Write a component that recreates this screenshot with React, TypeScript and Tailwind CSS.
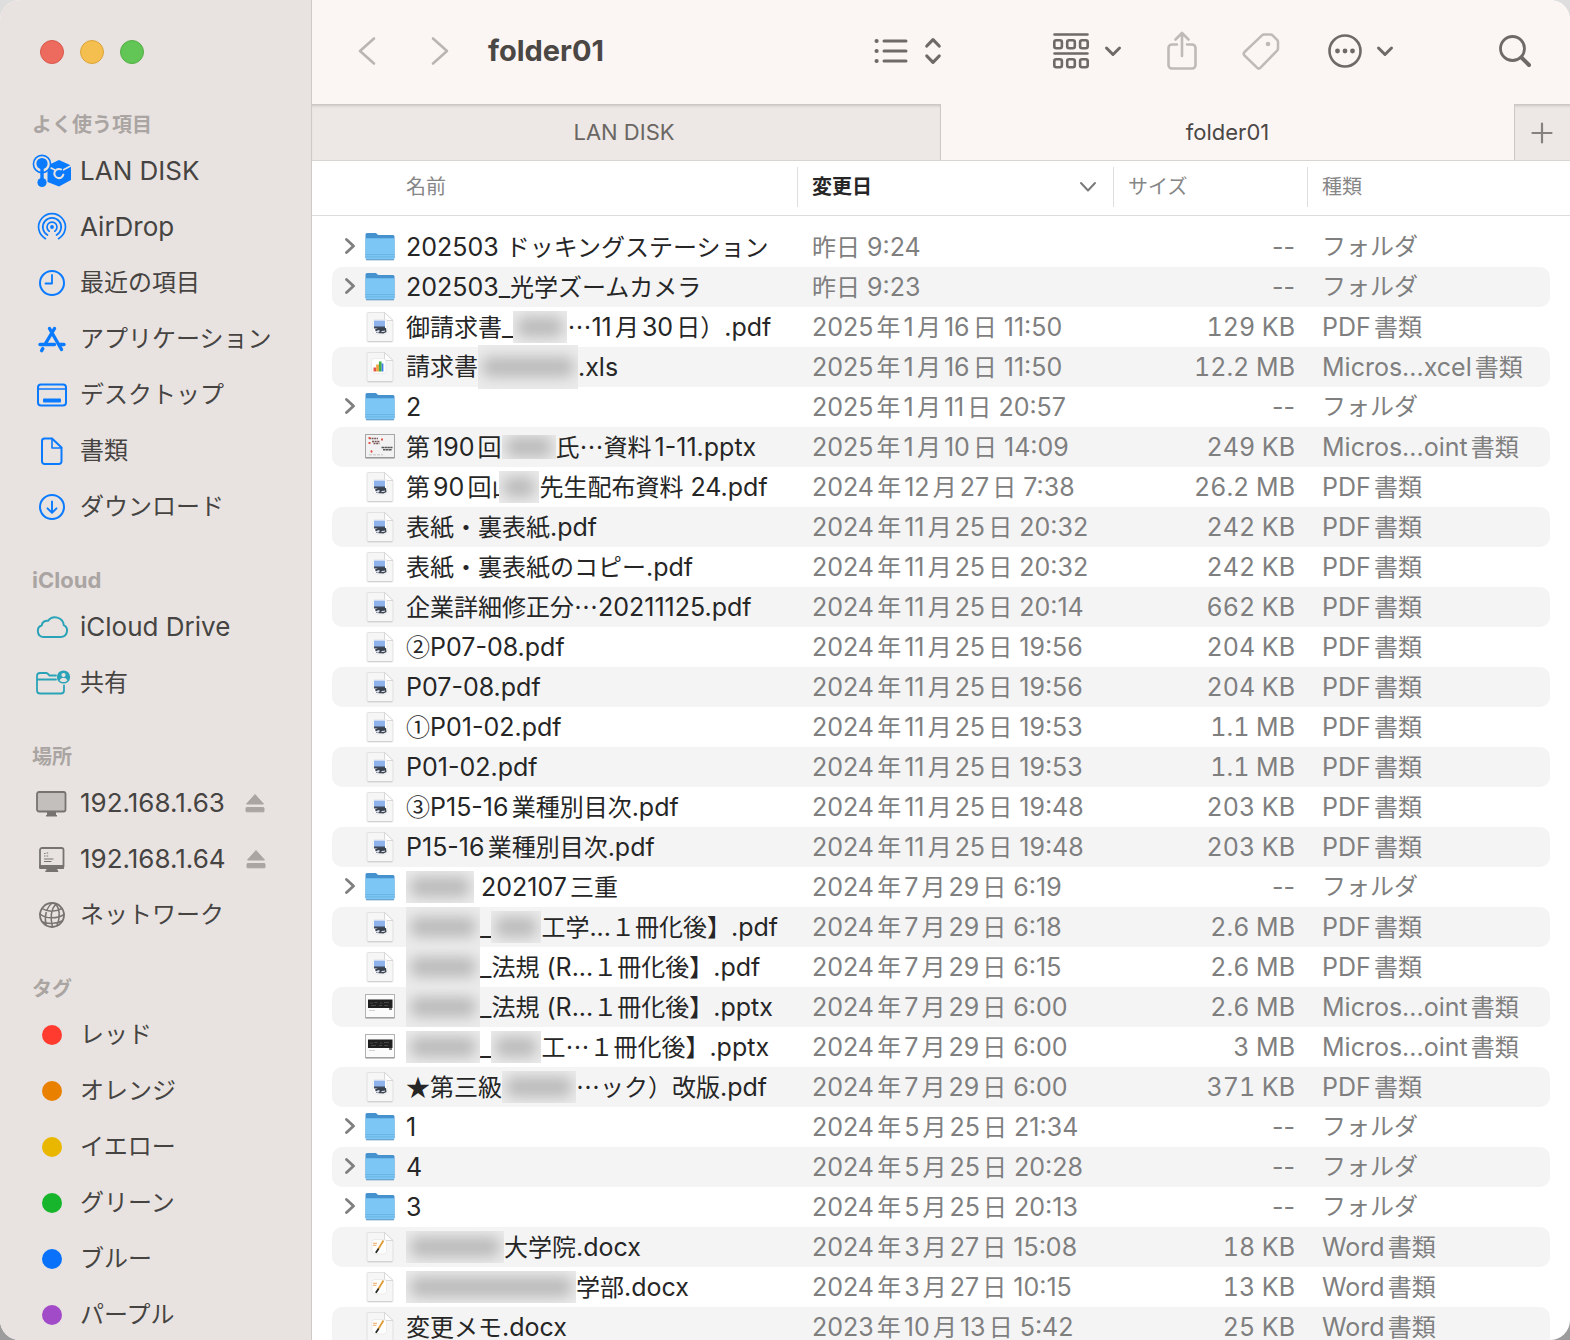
import type { ReactNode } from "react";
import clsx from "clsx";

type Part = string | { blur: string };
type Kind = "folder" | "pdf" | "xls" | "slide" | "slideDark" | "docx";

interface FileRow {
  icon: Kind;
  name: Part[];
  date: string;
  size: string;
  kind: string;
}

const FOLDER = "フォルダ";
const PDF = "PDF書類";
const PPT = "Micros...oint書類";
const WORD = "Word書類";

const files: FileRow[] = [
  { icon: "folder", name: ["202503 ドッキングステーション"], date: "昨日 9:24", size: "--", kind: FOLDER },
  { icon: "folder", name: ["202503_光学ズームカメラ"], date: "昨日 9:23", size: "--", kind: FOLDER },
  { icon: "pdf", name: ["御請求書_", { blur: "h-8 w-[54px]" }, "…11月30日）.pdf"], date: "2025年1月16日 11:50", size: "129 KB", kind: PDF },
  { icon: "xls", name: ["請求書", { blur: "h-11 w-[100px]" }, ".xls"], date: "2025年1月16日 11:50", size: "12.2 MB", kind: "Micros...xcel書類" },
  { icon: "folder", name: ["2"], date: "2025年1月11日 20:57", size: "--", kind: FOLDER },
  { icon: "slide", name: ["第190回", { blur: "h-6 w-[54px]" }, "氏…資料1-11.pptx"], date: "2025年1月10日 14:09", size: "249 KB", kind: PPT },
  { icon: "pdf", name: ["第90回山", { blur: "h-8 w-10 -ml-4" }, "先生配布資料 24.pdf"], date: "2024年12月27日 7:38", size: "26.2 MB", kind: PDF },
  { icon: "pdf", name: ["表紙・裏表紙.pdf"], date: "2024年11月25日 20:32", size: "242 KB", kind: PDF },
  { icon: "pdf", name: ["表紙・裏表紙のコピー.pdf"], date: "2024年11月25日 20:32", size: "242 KB", kind: PDF },
  { icon: "pdf", name: ["企業詳細修正分…20211125.pdf"], date: "2024年11月25日 20:14", size: "662 KB", kind: PDF },
  { icon: "pdf", name: ["②P07-08.pdf"], date: "2024年11月25日 19:56", size: "204 KB", kind: PDF },
  { icon: "pdf", name: ["P07-08.pdf"], date: "2024年11月25日 19:56", size: "204 KB", kind: PDF },
  { icon: "pdf", name: ["①P01-02.pdf"], date: "2024年11月25日 19:53", size: "1.1 MB", kind: PDF },
  { icon: "pdf", name: ["P01-02.pdf"], date: "2024年11月25日 19:53", size: "1.1 MB", kind: PDF },
  { icon: "pdf", name: ["③P15-16業種別目次.pdf"], date: "2024年11月25日 19:48", size: "203 KB", kind: PDF },
  { icon: "pdf", name: ["P15-16業種別目次.pdf"], date: "2024年11月25日 19:48", size: "203 KB", kind: PDF },
  { icon: "folder", name: [{ blur: "h-8 w-[68px]" }, " 202107三重"], date: "2024年7月29日 6:19", size: "--", kind: FOLDER },
  { icon: "pdf", name: [{ blur: "h-10 w-[74px]" }, "_", { blur: "h-8 w-[50px]" }, "工学...１冊化後】.pdf"], date: "2024年7月29日 6:18", size: "2.6 MB", kind: PDF },
  { icon: "pdf", name: [{ blur: "h-10 w-[74px]" }, "_法規 (R...１冊化後】.pdf"], date: "2024年7月29日 6:15", size: "2.6 MB", kind: PDF },
  { icon: "slideDark", name: [{ blur: "h-10 w-[74px]" }, "_法規 (R...１冊化後】.pptx"], date: "2024年7月29日 6:00", size: "2.6 MB", kind: PPT },
  { icon: "slideDark", name: [{ blur: "h-8 w-[74px]" }, "_", { blur: "h-8 w-[50px]" }, "工…１冊化後】.pptx"], date: "2024年7月29日 6:00", size: "3 MB", kind: PPT },
  { icon: "pdf", name: ["★第三級", { blur: "h-8 w-[74px]" }, "…ック）改版.pdf"], date: "2024年7月29日 6:00", size: "371 KB", kind: PDF },
  { icon: "folder", name: ["1"], date: "2024年5月25日 21:34", size: "--", kind: FOLDER },
  { icon: "folder", name: ["4"], date: "2024年5月25日 20:28", size: "--", kind: FOLDER },
  { icon: "folder", name: ["3"], date: "2024年5月25日 20:13", size: "--", kind: FOLDER },
  { icon: "docx", name: [{ blur: "h-8 w-[98px]" }, "大学院.docx"], date: "2024年3月27日 15:08", size: "18 KB", kind: WORD },
  { icon: "docx", name: [{ blur: "h-8 w-[170px]" }, "学部.docx"], date: "2024年3月27日 10:15", size: "13 KB", kind: WORD },
  { icon: "docx", name: ["変更メモ.docx"], date: "2023年10月13日 5:42", size: "25 KB", kind: WORD },
];

/* Sidebar icons, all drawn on a 40x36 box */

function SideIcon({ children, className }: { children: ReactNode; className?: string }) {
  return (
    <svg
      viewBox="0 0 40 36"
      className={clsx("h-9 w-10 shrink-0", className)}
      fill="none"
      stroke="currentColor"
      strokeWidth="2"
      strokeLinecap="round"
      strokeLinejoin="round"
      aria-hidden="true"
    >
      {children}
    </svg>
  );
}

const LanDiskIcon = () => (
  <SideIcon className="text-[#0a7aff]">
    <path d="M15.500 12.500 27 7l12 5.500V27l-12 6.500L15.500 29z" fill="currentColor" stroke="none" />
    <path d="M16 13.500l7 3.500M39.500 12.500 31 17" stroke="#e8e3e0" strokeWidth="1.500" strokeLinecap="butt" />
    <path d="M29 16.400a4.600 4.600 0 1 0 2.400 5.200" stroke="#e8e3e0" strokeWidth="2" />
    <circle cx="10" cy="11" r="8.600" fill="#e8e3e0" strokeWidth="1.600" />
    <circle cx="10" cy="10.500" r="5.600" fill="currentColor" stroke="none" />
    <path d="M10 11v18" strokeWidth="3.400" />
    <circle cx="10" cy="29.500" r="4.600" fill="currentColor" stroke="none" />
  </SideIcon>
);

const AirDropIcon = () => (
  <SideIcon className="text-[#0a7aff]">
    <circle cx="20" cy="18" r="1.900" fill="currentColor" stroke="none" />
    <path d="M17.200 22.200a5 5 0 1 1 5.600 0" strokeWidth="1.700" />
    <path d="M15.500 26a9.200 9.200 0 1 1 9 0" strokeWidth="1.700" />
    <path d="M13.500 29.700a13.400 13.400 0 1 1 13 0" strokeWidth="1.700" />
  </SideIcon>
);

const ClockIcon = () => (
  <SideIcon className="text-[#0a7aff]">
    <circle cx="20" cy="18" r="12" />
    <path d="M20 10v8.500h-6.500" strokeWidth="1.800" />
  </SideIcon>
);

const AppsIcon = () => (
  <SideIcon className="text-[#0a7aff]">
    <path d="M17.500 7.500 29.500 28.500M22.500 7.500l-8.700 14.500M10.800 27.600l-1.200 2" strokeWidth="3.400" />
    <path d="M8 23.500h14.500M28 23.500h4" strokeWidth="3.400" />
  </SideIcon>
);

const DesktopIcon = () => (
  <SideIcon className="text-[#0a7aff]">
    <rect x="6" y="7.500" width="28" height="21" rx="3" />
    <path d="M6 12h28" strokeWidth="1.600" />
    <rect x="11" y="21.500" width="18" height="4" rx=".8" fill="currentColor" stroke="none" />
  </SideIcon>
);

const DocumentIcon = () => (
  <SideIcon className="text-[#0a7aff]">
    <path d="M12.500 5.500H20l9.500 9v14a2.500 2.500 0 0 1-2.500 2.500H12.500a2.500 2.500 0 0 1-2.500-2.500V8a2.500 2.500 0 0 1 2.500-2.500z" />
    <path d="M20 5.500V15h9.500" strokeWidth="1.600" />
  </SideIcon>
);

const DownloadIcon = () => (
  <SideIcon className="text-[#0a7aff]">
    <circle cx="20" cy="18" r="12" />
    <path d="M20 12.500v11M15.500 19.300 20 23.800l4.500-4.500" strokeWidth="1.900" />
  </SideIcon>
);

const CloudIcon = () => (
  <SideIcon className="text-[#2aa3b8]">
    <path d="M11.500 28h17.200a6.300 6.300 0 0 0 3.100-11.800A8.800 8.800 0 0 0 16 11.800a5.200 5.200 0 0 0-6.200 4.400A6.100 6.100 0 0 0 11.500 28z" />
  </SideIcon>
);

const SharedFolderIcon = () => (
  <SideIcon className="text-[#2aa3b8]">
    <path d="M24 10.500h-6.500l-2-2a2 2 0 0 0-1.400-.5H8a3 3 0 0 0-3 3v14.500a3 3 0 0 0 3 3h21a3 3 0 0 0 3-3V20.500M5 14.500h19" strokeWidth="1.800" />
    <circle cx="31.500" cy="12" r="6.600" fill="currentColor" stroke="none" />
    <circle cx="31.500" cy="10" r="2.100" fill="#e8e3e0" stroke="none" />
    <path d="M27.700 15.800c.6-2.400 2-3.100 3.800-3.100s3.200.7 3.800 3.100c-2 1.700-5.600 1.700-7.600 0z" fill="#e8e3e0" stroke="none" />
  </SideIcon>
);

const DisplayIcon = () => (
  <SideIcon className="text-[#767371]">
    <rect x="5" y="7" width="28.500" height="19.500" rx="2" fill="#c3bfbd" strokeWidth="1.800" />
    <path d="M15 27h9v3h-9z" fill="currentColor" stroke="none" />
    <path d="M14 30h11v1.500H14z" fill="currentColor" stroke="none" />
  </SideIcon>
);

const PcIcon = () => (
  <SideIcon className="text-[#767371]">
    <rect x="8" y="7" width="23.500" height="20" rx="2" strokeWidth="1.800" />
    <path d="M8 24.500h23.500v3H8zM15.500 28h9l1.500 2.500H14z" fill="currentColor" strokeWidth="1" />
    <path d="M12.500 12.500h.6M15 12h.8M12.500 15h.6M15 15h.8M12.500 18h8.500M12.500 20.500H19" strokeWidth="1" />
  </SideIcon>
);

const NetworkIcon = () => (
  <SideIcon className="text-[#767371]">
    <circle cx="20" cy="18" r="12" strokeWidth="1.800" />
    <path d="M24 6.500c-5 6-6 14-3.500 23.500M20.500 6c-6 4-8.500 13-6.500 22M23.500 6.500c4 5 5 13 1.500 22M10 11.500c5 3.500 13.500 3.500 20 0M8 17c6 5 17 5 24 .5M10.500 25c5.500 2 14 2 19.500-1" strokeWidth="1.500" />
  </SideIcon>
);

const Dot = ({ className }: { className: string }) => (
  <span className="flex w-10 shrink-0 justify-center">
    <span className={clsx("size-5 rounded-full", className)} />
  </span>
);

interface SideItem {
  label: string;
  icon: ReactNode;
  eject?: boolean;
}

const sections: { title: string; items: SideItem[] }[] = [
  {
    title: "よく使う項目",
    items: [
      { label: "LAN DISK", icon: <LanDiskIcon /> },
      { label: "AirDrop", icon: <AirDropIcon /> },
      { label: "最近の項目", icon: <ClockIcon /> },
      { label: "アプリケーション", icon: <AppsIcon /> },
      { label: "デスクトップ", icon: <DesktopIcon /> },
      { label: "書類", icon: <DocumentIcon /> },
      { label: "ダウンロード", icon: <DownloadIcon /> },
    ],
  },
  {
    title: "iCloud",
    items: [
      { label: "iCloud Drive", icon: <CloudIcon /> },
      { label: "共有", icon: <SharedFolderIcon /> },
    ],
  },
  {
    title: "場所",
    items: [
      { label: "192.168.1.63", icon: <DisplayIcon />, eject: true },
      { label: "192.168.1.64", icon: <PcIcon />, eject: true },
      { label: "ネットワーク", icon: <NetworkIcon /> },
    ],
  },
  {
    title: "タグ",
    items: [
      { label: "レッド", icon: <Dot className="bg-[#ff3b30]" /> },
      { label: "オレンジ", icon: <Dot className="bg-[#ea8000]" /> },
      { label: "イエロー", icon: <Dot className="bg-[#eab700]" /> },
      { label: "グリーン", icon: <Dot className="bg-[#16b52c]" /> },
      { label: "ブルー", icon: <Dot className="bg-[#0a72fa]" /> },
      { label: "パープル", icon: <Dot className="bg-[#a24bc8]" /> },
    ],
  },
];

// Latin runs are set a little larger than the kana and kanji beside them
function Mixed({ text, latin = "text-[25px]" }: { text: string; latin?: string }) {
  return (
    <span className="whitespace-pre">
      {text.split(/([\x20-\x7e]+|[…①②③★]+)/).map((run, i) => {
        if (i % 2 === 0) return run;
        const symbol = /[…①②③★]/.test(run);
        return (
          <span key={i} className={symbol ? "font-['Noto_Sans_CJK_JP',sans-serif]" : latin}>
            {run}
          </span>
        );
      })}
    </span>
  );
}

function Sidebar() {
  return (
    <aside className="flex w-78 shrink-0 flex-col overflow-hidden border-r border-[#cfcac7] bg-[#e8e3e0]">
      <div className="flex h-[79px] shrink-0 gap-4 pt-10 pl-10">
        <button aria-label="閉じる" className="size-6 rounded-full border border-[#d9574c] bg-[#ed6a5f]" />
        <button aria-label="しまう" className="size-6 rounded-full border border-[#dba53c] bg-[#f5bf4f]" />
        <button aria-label="拡大" className="size-6 rounded-full border border-[#55ad45] bg-[#61c655]" />
      </div>
      <nav>
        {sections.map((section) => (
          <section key={section.title}>
            <h2 className="flex h-16 items-end pb-[3px] pl-8 text-xl leading-[30px] font-bold text-[#aaa5a2]">
              <Mixed text={section.title} latin="text-[22px]" />
            </h2>
            <ul>
              {section.items.map((item) => (
                <li key={item.label} className="flex h-14 items-center pl-8">
                  <a href="#" className="flex items-center gap-2 text-[#464442]">
                    {item.icon}
                    <Mixed text={item.label} latin="text-[26px]" />
                  </a>
                  {item.eject && (
                    <button aria-label={`${item.label} を取り出す`} className="ml-5 text-[#aaa5a2]">
                      <svg viewBox="0 0 20 20" className="size-5" fill="currentColor" stroke="currentColor" strokeLinejoin="round">
                        <path d="M10 1.500 18.500 11h-17z" />
                        <rect x="1" y="14.500" width="18" height="4.300" rx=".6" />
                      </svg>
                    </button>
                  )}
                </li>
              ))}
            </ul>
          </section>
        ))}
      </nav>
    </aside>
  );
}

const Chevron = ({ className }: { className?: string }) => (
  <svg viewBox="0 0 18 12" className={clsx("h-3 w-[18px]", className)} fill="none" stroke="currentColor" strokeWidth="3" strokeLinecap="round" strokeLinejoin="round" aria-hidden="true">
    <path d="M2.500 3 9 9.500 15.500 3" />
  </svg>
);

function Toolbar() {
  return (
    <header className="flex h-26 shrink-0 items-center bg-[#fbf6f3] pr-[38px] pb-0.5 pl-11 text-[#6f6a67]">
      <button aria-label="戻る" className="text-[#bab5b2]">
        <svg viewBox="0 0 24 32" className="h-8 w-6" fill="none" stroke="currentColor" strokeWidth="2.600" strokeLinecap="round" strokeLinejoin="round">
          <path d="M18 3.500 4 16l14 12.500" />
        </svg>
      </button>
      <button aria-label="進む" className="ml-12 text-[#bab5b2]">
        <svg viewBox="0 0 24 32" className="h-8 w-6" fill="none" stroke="currentColor" strokeWidth="2.600" strokeLinecap="round" strokeLinejoin="round">
          <path d="M5 3.500 19 16 5 28.500" />
        </svg>
      </button>
      <h1 className="ml-9 text-[29px] leading-9 font-bold text-[#4b4745]">folder01</h1>
      <button aria-label="表示" className="ml-auto flex items-center gap-4">
        <svg viewBox="0 0 34 28" className="h-7 w-[34px]" fill="none" stroke="currentColor" strokeWidth="3" strokeLinecap="round">
          <path d="M10 4h22M10 14h22M10 24h22" />
          <path d="M2.500 4h.2M2.500 14h.2M2.500 24h.2" strokeWidth="4" />
        </svg>
        <svg viewBox="0 0 18 28" className="h-7 w-[18px]" fill="none" stroke="currentColor" strokeWidth="3.200" strokeLinecap="round" strokeLinejoin="round">
          <path d="M2.800 9 9 2.600 15.200 9M2.800 19 9 25.400 15.200 19" />
        </svg>
      </button>
      <button aria-label="グループ分け" className="ml-[110px] flex items-center gap-[14px]">
        <svg viewBox="0 0 38 36" className="h-9 w-[38px]" fill="none" stroke="currentColor" strokeWidth="2.600" strokeLinecap="round">
          <path d="M2.500 1.500h33M2.500 20.500h33" />
          <rect x="2.300" y="7.300" width="7.600" height="8" rx="2" />
          <rect x="15.200" y="7.300" width="7.600" height="8" rx="2" />
          <rect x="28.100" y="7.300" width="7.600" height="8" rx="2" />
          <rect x="2.300" y="26.300" width="7.600" height="8" rx="2" />
          <rect x="15.200" y="26.300" width="7.600" height="8" rx="2" />
          <rect x="28.100" y="26.300" width="7.600" height="8" rx="2" />
        </svg>
        <Chevron />
      </button>
      <button aria-label="共有" className="ml-11 pb-0.5 text-[#bfbab7]">
        <svg viewBox="0 0 32 40" className="h-10 w-8" fill="none" stroke="currentColor" strokeWidth="2.600" strokeLinecap="round" strokeLinejoin="round">
          <path d="M11 14.500H6a3.500 3.500 0 0 0-3.500 3.500v17A3.500 3.500 0 0 0 6 38.500h20a3.500 3.500 0 0 0 3.500-3.500V18a3.500 3.500 0 0 0-3.500-3.500h-5M16 26V4M9.500 9.500 16 3l6.500 6.500" />
        </svg>
      </button>
      <button aria-label="タグを編集" className="ml-11 text-[#bfbab7]">
        <svg viewBox="0 0 38 38" className="size-[38px]" fill="none" stroke="currentColor" strokeWidth="2.500" strokeLinejoin="round">
          <path d="M20 3.300a3 3 0 0 1 2-.8h6.500a3 3 0 0 1 2.100.9l4.500 4.500a3 3 0 0 1 .9 2.100v6.500a3 3 0 0 1-.9 2.100L18.500 35.700a2.500 2.500 0 0 1-3.500 0L2.500 23.500a2.500 2.500 0 0 1 0-3.500z" />
          <circle cx="26" cy="12" r="2.300" fill="currentColor" stroke="none" />
        </svg>
      </button>
      <button aria-label="その他" className="ml-12 flex items-center gap-[14px]">
        <svg viewBox="0 0 34 34" className="size-[34px]" fill="none" stroke="currentColor" strokeWidth="2.600">
          <circle cx="17" cy="17" r="15.500" />
          <g fill="currentColor" stroke="none">
            <circle cx="9.500" cy="17" r="2.400" />
            <circle cx="17" cy="17" r="2.400" />
            <circle cx="24.500" cy="17" r="2.400" />
          </g>
        </svg>
        <Chevron />
      </button>
      <button aria-label="検索" className="ml-26">
        <svg viewBox="0 0 34 34" className="size-[34px]" fill="none" stroke="currentColor" strokeLinecap="round">
          <circle cx="14.500" cy="14.500" r="12" strokeWidth="2.800" />
          <path d="m23.500 23.500 7.500 7.500" strokeWidth="4" />
        </svg>
      </button>
    </header>
  );
}

function Tabs() {
  return (
    <div className="flex h-[57px] shrink-0 border-b border-[#d8d4d2] bg-[#fbf6f3] text-[22px] leading-7">
      <button className="w-1/2 border-t border-r border-[#cdc8c5] bg-[#ede8e5] pr-1 pb-0.5 text-[#6a6663] shadow-[inset_0_3px_3px_-2px_#c9c4c1]">
        LAN DISK
      </button>
      <button className="flex-1 text-[#4b4745]">folder01</button>
      <button
        aria-label="新規タブ"
        className="flex w-14 items-center justify-center border-t border-l border-[#cdc8c5] bg-[#ede8e5] pr-0.5 text-[#85817e] shadow-[inset_0_3px_3px_-2px_#c9c4c1]"
      >
        <svg viewBox="0 0 22 22" className="size-[22px]" stroke="currentColor" strokeWidth="2.200" strokeLinecap="round">
          <path d="M11 1.500v19M1.500 11h19" />
        </svg>
      </button>
    </div>
  );
}

/* List icons, 32x32 */

function Paper({ children }: { children: ReactNode }) {
  return (
    <>
      <path d="M4 1.500h16.500L29 9.500v20a1 1 0 0 1-1 1H4a1 1 0 0 1-1-1v-27a1 1 0 0 1 1-1z" fill="#f6f6f6" stroke="#dcdcdc" strokeWidth=".8" />
      <path d="M3.500 30.800h25" stroke="#c4c4c4" strokeWidth=".8" />
      <path d="M20.500 1.500V8a1.500 1.500 0 0 0 1.500 1.500h7z" fill="#fff" stroke="#cfcfcf" strokeWidth=".8" />
      {children}
    </>
  );
}

function FileIcon({ kind }: { kind: Kind }) {
  return (
    <svg viewBox="0 0 32 32" className="mr-[10px] size-8 shrink-0" aria-hidden="true">
      {kind === "folder" && (
        <>
          <path d="M1.500 3.500A1.500 1.500 0 0 1 3 2h8c1 0 1.500.5 2.300 1.200.6.600 1 .8 2 .8H29a1.500 1.500 0 0 1 1.500 1.500V27h-29z" fill="#4592cf" />
          <path d="M1.500 8.200a1 1 0 0 1 1-1h27a1 1 0 0 1 1 1v19a1.500 1.500 0 0 1-1.500 1.500H3a1.500 1.500 0 0 1-1.500-1.500z" fill="#7cc6f5" />
          <path d="M1.500 23.500h29M1.500 25.800h29" stroke="#62aede" strokeWidth=".7" />
          <path d="M2 28.800h28" stroke="#5795bf" strokeWidth="1" />
        </>
      )}
      {kind === "pdf" && (
        <Paper>
          <rect x="9" y="8.500" width="14" height="14.500" rx="2" fill="#fff" stroke="#e2e2e2" strokeWidth=".6" />
          <path d="M10 9.500h11v7H10z" fill="#8fb2ec" />
          <path d="M10 15.500h11v2H10z" fill="#3c4656" />
          <path d="m11 18.500 3-1.500h8l.5 4-3 1.500-7-.5z" fill="#39414f" />
          <path d="M11.500 20.500l3-1.500 1.500 1-2 2z" fill="#dbe4f0" />
          <path d="m17.500 20.800 3.500-.8" stroke="#e8ecf2" strokeWidth="1.100" />
        </Paper>
      )}
      {kind === "xls" && (
        <Paper>
          <rect x="7.500" y="7.500" width="14.500" height="15" rx="3" fill="#fff" stroke="#e2e2e2" strokeWidth=".6" />
          <path d="M9.500 16.500h2.700v4H9.500z" fill="#e2574a" />
          <path d="M12.200 13.500h2.700v7h-2.700z" fill="#f0a03a" />
          <path d="M14.900 10.500h2.700v10h-2.700z" fill="#3fae49" />
          <path d="M17.600 12.500h1.800v8h-1.800z" fill="#3f7de0" />
        </Paper>
      )}
      {kind === "docx" && (
        <Paper>
          <rect x="8" y="8.500" width="14.500" height="14.500" rx="3" fill="#fff" stroke="#e2e2e2" strokeWidth=".6" />
          <path d="M9 12.300h4M9 14.300h3.500" stroke="#f0a860" strokeWidth="1.100" />
          <path d="m19.500 9.500-5.500 9" stroke="#e09a35" strokeWidth="1.800" />
          <path d="m14.200 18.200-2 3" stroke="#2b2b2b" strokeWidth="1.800" strokeLinecap="round" />
        </Paper>
      )}
      {kind === "slide" && (
        <>
          <rect x="1.500" y="3.500" width="29" height="23" fill="#f2f2f2" stroke="#a5a5a5" strokeWidth="1" />
          <path d="M1.500 27h29" stroke="#8e8e8e" />
          <path d="M5 7.500h9M8 10.500h8M9.500 12.500h6" stroke="#7b5a5a" strokeWidth="1.300" strokeDasharray="2 .6" />
          <path d="M17.500 16.500h11M19 18.800h9" stroke="#555" strokeWidth="1.500" strokeDasharray="2.500 .4" />
          <path d="M4.500 7h2M17 8.500h2M4.500 12h2M7 19.500l1 2" stroke="#e0584a" strokeWidth="1.800" />
          <path d="M5 23.800h14" stroke="#b9b9b9" strokeWidth=".8" strokeDasharray="3 1" />
        </>
      )}
      {kind === "slideDark" && (
        <>
          <rect x="1.500" y="3.500" width="29" height="23" fill="#fbfbfb" stroke="#b2b2b2" strokeWidth="1" />
          <path d="M1.500 27h29" stroke="#8e8e8e" />
          <path d="M4 8.500h24.500V17H4z" fill="#202020" />
          <path d="M6 12h3M10.500 11.500h3M16 12h2M20 11.500h5M7 14.500h5M15 14.500h3M20 14.500h4" stroke="#4c4c4c" strokeWidth=".9" />
          <path d="M25 17h3v2h-3z" fill="#777" />
          <path d="M5 19.500h6" stroke="#c8c8c8" strokeWidth=".8" />
        </>
      )}
    </svg>
  );
}

function NamePart({ part }: { part: Part }) {
  if (typeof part === "string") return <Mixed text={part} />;
  return (
    <span className={clsx("relative flex shrink-0 items-center overflow-hidden bg-[#ebebeb]", part.blur)}>
      <span className="mx-1 h-5 flex-1 rounded-lg bg-[#bababa] blur-[7px]" />
    </span>
  );
}

function FileTable() {
  const th = "h-[55px] border-b border-[#dcdcdc] p-0 pb-0.5 text-left font-normal";
  const thInner = "flex h-10 items-center justify-between border-l border-[#dedede] pr-4 pl-[14px]";
  return (
    <table className="w-full table-fixed border-separate border-spacing-0">
      <colgroup>
        <col className="w-5" />
        <col className="w-[465px]" />
        <col className="w-[316px]" />
        <col className="w-[194px]" />
        <col />
        <col className="w-5" />
      </colgroup>
      <thead className="text-xl leading-7 text-[#868686]">
        <tr>
          <td className={th} />
          <th scope="col" className={clsx(th, "pl-[74px]")}>名前</th>
          <th scope="col" aria-sort="descending" className={th}>
            <div className={clsx(thInner, "font-bold text-[#262626]")}>
              変更日
              <svg viewBox="0 0 18 12" className="h-3 w-[18px] text-[#7a7a7a]" fill="none" stroke="currentColor" strokeWidth="2" strokeLinecap="round" strokeLinejoin="round" aria-hidden="true">
                <path d="M2 2l7 7.500L16 2" />
              </svg>
            </div>
          </th>
          <th scope="col" className={th}>
            <div className={thInner}>サイズ</div>
          </th>
          <th scope="col" className={th}>
            <div className={thInner}>種類</div>
          </th>
          <td className={th} />
        </tr>
      </thead>
      <tbody className="whitespace-nowrap text-[#7f7f7f] before:block before:h-[11px]">
        {files.map((file, i) => (
          <tr key={i} className="group">
            <td className="h-10 p-0" />
            <td className="rounded-l-[10px] p-0 text-[#262626] group-even:bg-[#f4f4f5]">
              <div className="flex h-10 items-center pl-3">
                <span className="mr-2 flex w-3 shrink-0 text-[#7f7f7f]">
                  {file.icon === "folder" && (
                    <button aria-label="開く">
                      <svg viewBox="0 0 12 18" className="h-[18px] w-3" fill="none" stroke="currentColor" strokeWidth="2.800" strokeLinecap="round" strokeLinejoin="round">
                        <path d="M2.500 1.500 9.500 8l-7 6.500" />
                      </svg>
                    </button>
                  )}
                </span>
                <FileIcon kind={file.icon} />
                {file.name.map((part, j) => (
                  <NamePart key={j} part={part} />
                ))}
              </div>
            </td>
            <td className="p-0 pl-[15px] group-even:bg-[#f4f4f5]">
              <Mixed text={file.date} />
            </td>
            <td className={clsx("p-0 pr-3 text-right group-even:bg-[#f4f4f5]", file.size !== "--" && "tabular-nums")}>
              <Mixed text={file.size} />
            </td>
            <td className="rounded-r-[10px] p-0 pl-[15px] group-even:bg-[#f4f4f5]">
              <Mixed text={file.kind} />
            </td>
            <td className="p-0" />
          </tr>
        ))}
      </tbody>
    </table>
  );
}

export default function App() {
  return (
    <div className="h-screen bg-linear-to-b from-[#dedede] to-[#9c9c9c]">
      <div
        lang="ja"
        className="flex h-full overflow-hidden rounded-[20px] bg-white font-['Inter','Noto_Sans_CJK_JP',sans-serif] text-2xl leading-8 [text-autospace:normal]"
      >
        <Sidebar />
        <main className="flex min-w-0 flex-1 flex-col overflow-hidden">
          <Toolbar />
          <Tabs />
          <FileTable />
        </main>
      </div>
    </div>
  );
}
